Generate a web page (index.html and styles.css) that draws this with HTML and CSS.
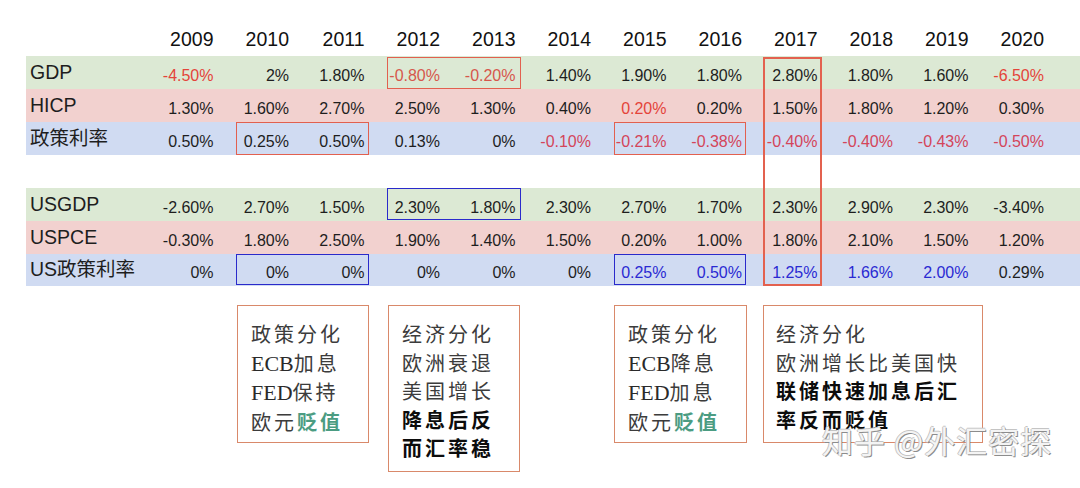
FILE: index.html
```html
<!DOCTYPE html>
<html lang="zh">
<head>
<meta charset="utf-8">
<link rel="stylesheet" href="styles.css">
</head>
<body>
<div class="sheet">
  <div class="row head">
    <div class="lab"></div>
    <div class="v">2009</div><div class="v">2010</div><div class="v">2011</div><div class="v">2012</div>
    <div class="v">2013</div><div class="v">2014</div><div class="v">2015</div><div class="v">2016</div>
    <div class="v">2017</div><div class="v">2018</div><div class="v">2019</div><div class="v">2020</div>
  </div>
  <div class="row green">
    <div class="lab">GDP</div>
    <div class="v red">-4.50%</div><div class="v">2%</div><div class="v">1.80%</div><div class="v redsoft">-0.80%</div>
    <div class="v redsoft">-0.20%</div><div class="v">1.40%</div><div class="v">1.90%</div><div class="v">1.80%</div>
    <div class="v">2.80%</div><div class="v">1.80%</div><div class="v">1.60%</div><div class="v red">-6.50%</div>
  </div>
  <div class="row pink">
    <div class="lab">HICP</div>
    <div class="v">1.30%</div><div class="v">1.60%</div><div class="v">2.70%</div><div class="v">2.50%</div>
    <div class="v">1.30%</div><div class="v">0.40%</div><div class="v red">0.20%</div><div class="v">0.20%</div>
    <div class="v">1.50%</div><div class="v">1.80%</div><div class="v">1.20%</div><div class="v">0.30%</div>
  </div>
  <div class="row blue">
    <div class="lab">政策利率</div>
    <div class="v">0.50%</div><div class="v">0.25%</div><div class="v">0.50%</div><div class="v">0.13%</div>
    <div class="v">0%</div><div class="v rose">-0.10%</div><div class="v rose">-0.21%</div><div class="v rose">-0.38%</div>
    <div class="v rose">-0.40%</div><div class="v rose">-0.40%</div><div class="v rose">-0.43%</div><div class="v rose">-0.50%</div>
  </div>
  <div class="spacer"></div>
  <div class="row green">
    <div class="lab">USGDP</div>
    <div class="v">-2.60%</div><div class="v">2.70%</div><div class="v">1.50%</div><div class="v">2.30%</div>
    <div class="v">1.80%</div><div class="v">2.30%</div><div class="v">2.70%</div><div class="v">1.70%</div>
    <div class="v">2.30%</div><div class="v">2.90%</div><div class="v">2.30%</div><div class="v">-3.40%</div>
  </div>
  <div class="row pink">
    <div class="lab">USPCE</div>
    <div class="v">-0.30%</div><div class="v">1.80%</div><div class="v">2.50%</div><div class="v">1.90%</div>
    <div class="v">1.40%</div><div class="v">1.50%</div><div class="v">0.20%</div><div class="v">1.00%</div>
    <div class="v">1.80%</div><div class="v">2.10%</div><div class="v">1.50%</div><div class="v">1.20%</div>
  </div>
  <div class="row blue short">
    <div class="lab">US政策利率</div>
    <div class="v">0%</div><div class="v">0%</div><div class="v">0%</div><div class="v">0%</div>
    <div class="v">0%</div><div class="v">0%</div><div class="v bl">0.25%</div><div class="v bl">0.50%</div>
    <div class="v bl">1.25%</div><div class="v bl">1.66%</div><div class="v bl">2.00%</div><div class="v">0.29%</div>
  </div>

  <div class="notes">
    <div class="note n1">
      <p>政策分化</p>
      <p><span class="lat">ECB</span>加息</p>
      <p><span class="lat">FED</span>保持</p>
      <p>欧元<b class="teal">贬值</b></p>
    </div>
    <div class="note n2">
      <p>经济分化</p>
      <p>欧洲衰退</p>
      <p>美国增长</p>
      <p><b>降息后反</b></p>
      <p><b>而汇率稳</b></p>
    </div>
    <div class="note n3">
      <p>政策分化</p>
      <p><span class="lat">ECB</span>降息</p>
      <p><span class="lat">FED</span>加息</p>
      <p>欧元<b class="teal">贬值</b></p>
    </div>
    <div class="note n4">
      <p>经济分化</p>
      <p>欧洲增长比美国快</p>
      <p><b>联储快速加息后汇</b></p>
      <p><b>率反而贬值</b></p>
    </div>
  </div>

  <div class="mark rb" style="left:387px;top:57px;width:134px;height:32px"></div>
  <div class="mark rb" style="left:236px;top:122px;width:133px;height:33px"></div>
  <div class="mark rb" style="left:614px;top:122px;width:132px;height:33px"></div>
  <div class="mark rb tall" style="left:763px;top:57px;width:59px;height:229px"></div>
  <div class="mark bb" style="left:387px;top:188px;width:134px;height:32px"></div>
  <div class="mark bb" style="left:236px;top:254px;width:133px;height:31px"></div>
  <div class="mark bb" style="left:614px;top:254px;width:132px;height:31px"></div>

  <div class="watermark">知乎 @外汇密探</div>
</div>
</body>
</html>
```
FILE: styles.css
```css
html, body {
  margin: 0;
  padding: 0;
  background: #ffffff;
}
body {
  font-family: "Liberation Sans", Arial, "Noto Sans CJK SC", sans-serif;
  color: #1e1e1e;
  width: 1080px;
  height: 488px;
  overflow: hidden;
}
.sheet {
  position: relative;
  padding: 24px 0 0 26px;
  width: 1054px;
  height: 464px;
}
.row {
  display: grid;
  grid-template-columns: 116px repeat(12, 75.5px);
  height: 33px;
  align-items: center;
}
.row.head { height: 32px; }
.row.short { height: 32px; }
.green { background: #dce9d4; }
.pink { background: #f2d1cf; }
.blue { background: #d0dbf2; }
.lab {
  font-size: 19.5px;
  line-height: 1;
  padding-left: 4px;
  white-space: nowrap;
}
.v {
  font-size: 16px;
  line-height: 1;
  text-align: right;
  padding-right: 4px;
  padding-top: 6px;
}
.head .v {
  font-size: 19.5px;
  padding-top: 0;
  color: #111;
}
.red { color: #e4443a; }
.redsoft { color: #d6574c; }
.rose { color: #d4455a; }
.bl { color: #2a2ad2; }
.spacer { height: 33px; }

.notes {
  display: flex;
  align-items: flex-start;
  margin-top: 19px;
}
.note {
  box-sizing: border-box;
  border: 1.5px solid #d9896a;
  height: 138px;
  padding: 14px 0 0 13px;
  font-family: "Noto Sans CJK SC", sans-serif;
  font-size: 20px;
  letter-spacing: 3px;
  line-height: 28.5px;
  color: #3c3c3c;
}
.note p { margin: 0; white-space: nowrap; }
.note .lat {
  font-family: "Liberation Serif", "Times New Roman", serif;
  font-size: 22px;
  letter-spacing: 0;
  color: #2a2a2a;
}
.note b { color: #0c0c0c; font-weight: 700; }
.note b.teal { color: #4b9c82; }
.n1 { margin-left: 211px; width: 132px; }
.n2 { margin-left: 19px; width: 132px; height: 167px; }
.n3 { margin-left: 94px; width: 133px; }
.n4 { margin-left: 16px; width: 220px; padding-left: 12px; }

.mark {
  position: absolute;
  box-sizing: border-box;
  pointer-events: none;
}
.rb { border: 1.5px solid #e2604f; }
.rb.tall { border: 2px solid #e3614f; }
.bb { border: 1.5px solid #2a2acb; }

.watermark {
  position: absolute;
  left: 822px;
  top: 420px;
  font-family: "Noto Sans CJK SC", sans-serif;
  font-size: 31px;
  line-height: 40px;
  color: #f4f4f4;
  letter-spacing: 1px;
  text-shadow: 1px 1px 0 #8c8c8c, -1px 0 0 #c4c4c4, 0 -1px 0 #c4c4c4;
  white-space: nowrap;
}
```
